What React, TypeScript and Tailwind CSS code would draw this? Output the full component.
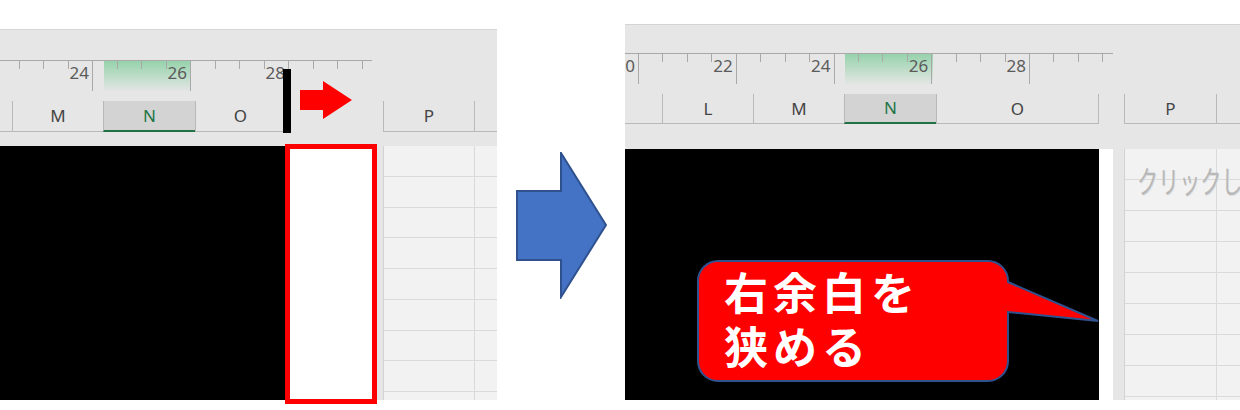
import React from "react";

type RulerProps = {
  id: string;
  width: number;
  lineEnd: number;
  first: number;
  step: number;
  labels: string[];
  hlFrom: number;
  hlTo: number;
};

// ruler ticks + labels, like Excel's page layout view
function Ruler({ id, width, lineEnd, first, step, labels, hlFrom, hlTo }: RulerProps) {
  const ticks: { x: number; major: boolean }[] = [];
  for (let k = 0; k < 40; k++) {
    const x = first + (k * step) / 4;
    if (x > lineEnd) break;
    if (x < 0) continue;
    ticks.push({ x, major: k % 4 === 0 });
  }
  return (
    <svg width={width} height={41} className="block shrink-0">
      <defs>
        <linearGradient id={id} x1="0" y1="0" x2="0" y2="1">
          <stop offset="0" stopColor="#93d2a9" />
          <stop offset="1" stopColor="#e6e6e6" />
        </linearGradient>
      </defs>
      <rect x={hlFrom} y={0} width={hlTo - hlFrom} height={32} fill={`url(#${id})`} />
      <line x1={0} y1={0.5} x2={lineEnd} y2={0.5} stroke="#a9a9a9" />
      {ticks.map((t, i) => (
        <line
          key={i}
          x1={Math.round(t.x) + 0.5}
          y1={0}
          x2={Math.round(t.x) + 0.5}
          y2={t.major ? 31 : 9}
          stroke="#a9a9a9"
        />
      ))}
      {labels.map((l, i) => {
        const x = first + i * step - 3;
        if (x > lineEnd || x < 5) return null;
        return (
          <text
            key={l}
            x={x}
            y={18.5}
            textAnchor="end"
            fontFamily="Noto Sans, Open Sans, sans-serif"
            fontSize={17}
            fill="#5b5b5b"
          >
            {l}
          </text>
        );
      })}
    </svg>
  );
}

const head = "flex items-center justify-center border-b border-[#b9b9b9] text-[17px] text-[#444]";
const headSel =
  "flex items-center justify-center bg-[#d3d3d3] border-l border-b-2 border-[#b9b9b9] border-b-[#217346] text-[17px] text-[#217346]";

function CellRow({ tall }: { tall?: boolean }) {
  return (
    <div
      className={
        tall
          ? "flex shrink-0 h-[31px] border-b border-[#dadada]"
          : "flex shrink-0 h-[30.75px] border-b border-[#dadada]"
      }
    >
      <div className={tall ? "w-[92px] border-r border-[#dadada]" : "w-[91px] border-r border-[#dadada]"} />
    </div>
  );
}

export default function App() {
  const rows = Array.from({ length: 9 });
  return (
    <div className="w-[1240px] h-[410px] bg-white flex items-start overflow-hidden font-['Noto_Sans','Open_Sans',sans-serif]">
      {/* before */}
      <div className="relative w-[497px] shrink-0 mt-[29px] h-[371px] bg-[#e6e6e6] border-t border-[#d4d4d4] flex flex-col">
        <div className="h-[30px] shrink-0" />
        <Ruler
          id="hl-a"
          width={497}
          lineEnd={372}
          first={-6}
          step={98}
          labels={["22", "24", "26", "28", "30"]}
          hlFrom={104}
          hlTo={191}
        />
        <div className="flex h-[31px] shrink-0">
          <div className={`${head} w-[12px]`} />
          <div className={`${head} w-[91px] border-l`}>M</div>
          <div className={`${headSel} w-[92px]`}>N</div>
          <div className={`${head} w-[90px] border-l`}>O</div>
          <div className="w-[98px]" />
          <div className={`${head} w-[91px] border-l`}>P</div>
          <div className={`${head} flex-1 border-l`} />
        </div>
        <div className="h-[14px] shrink-0" />
        <div className="flex h-[254px] shrink-0 items-start">
          <div className="w-[285px] h-full bg-black shrink-0" />
          <div className="w-[92px] h-[260px] -mt-[2px] shrink-0 border-[5px] border-[#ff0000] bg-white" />
          <div className="w-[6px] shrink-0" />
          <div className="flex-1 h-full overflow-hidden border-l border-[#d3d3d3] bg-[#f2f2f2] flex flex-col">
            {rows.map((_, i) => (
              <CellRow key={i} />
            ))}
          </div>
        </div>

        {/* dragged margin handle */}
        <div className="absolute left-[283px] top-[39px] w-[8px] h-[64px] bg-black" />
        <svg className="absolute left-[300px] top-[51px]" width={52} height={38}>
          <polygon points="0,9 23,9 23,0 52,19 23,38 23,29 0,29" fill="#ff0000" />
        </svg>
      </div>

      {/* big arrow */}
      <div className="w-[128px] shrink-0 pt-[152px] pl-[19px]">
        <svg width={91} height={147} className="block">
          <polygon
            points="1,39 45,39 45,1 90,73 45,145 45,108 1,108"
            fill="#4472c4"
            stroke="#2f528f"
            strokeWidth={2}
            strokeLinejoin="miter"
          />
        </svg>
      </div>

      {/* after */}
      <div className="relative w-[615px] shrink-0 mt-[24px] h-[376px] bg-[#e6e6e6] border-t border-[#d4d4d4] flex flex-col overflow-hidden">
        <div className="h-[28px] shrink-0" />
        <Ruler
          id="hl-b"
          width={615}
          lineEnd={488}
          first={13}
          step={97.75}
          labels={["20", "22", "24", "26", "28", "30"]}
          hlFrom={220}
          hlTo={308}
        />
        <div className="flex h-[30px] shrink-0">
          <div className={`${head} w-[37px]`} />
          <div className={`${head} w-[91px] border-l`}>L</div>
          <div className={`${head} w-[91px] border-l`}>M</div>
          <div className={`${headSel} w-[92px]`}>N</div>
          <div className={`${head} w-[163px] border-l border-r`}>O</div>
          <div className="w-[25px]" />
          <div className={`${head} w-[92px] border-l`}>P</div>
          <div className={`${head} flex-1 border-l`} />
        </div>
        <div className="h-[25px] shrink-0" />
        <div className="flex h-[251px] shrink-0">
          <div className="w-[474px] h-full bg-black shrink-0" />
          <div className="w-[14px] h-full bg-white shrink-0" />
          <div className="w-[11px] shrink-0" />
          <div className="relative flex-1 h-full overflow-hidden border-l border-[#d3d3d3] bg-[#f2f2f2] flex flex-col">
            {rows.map((_, i) => (
              <CellRow key={i} tall />
            ))}
            <div className="absolute left-[12px] top-[15px] origin-left scale-x-[0.68] whitespace-nowrap text-[31px] leading-none text-[#b8b8b8] font-['Noto_Sans_CJK_JP',sans-serif] [text-shadow:1px_1px_0_#dedede]">
              クリックしてヘッダーを追加
            </div>
          </div>
        </div>

        {/* callout */}
        <div className="absolute left-[72px] top-[235px] w-[404px] h-[124px]">
          <svg width={404} height={124} className="absolute inset-0">
            <path
              d="M21,1 H291 A20,20 0 0 1 311,21 V22 L401,61 L311,52 V101 A20,20 0 0 1 291,121 H21 A20,20 0 0 1 1,101 V21 A20,20 0 0 1 21,1 Z"
              fill="#ff0000"
              stroke="#2f528f"
              strokeWidth={2}
            />
          </svg>
          <div className="relative pl-[27px] pt-[4px] text-[44px] leading-[54px] tracking-[5px] font-bold text-white font-['Noto_Sans_CJK_JP',sans-serif]">
            <div>右余白を</div>
            <div>狭める</div>
          </div>
        </div>
      </div>
    </div>
  );
}
